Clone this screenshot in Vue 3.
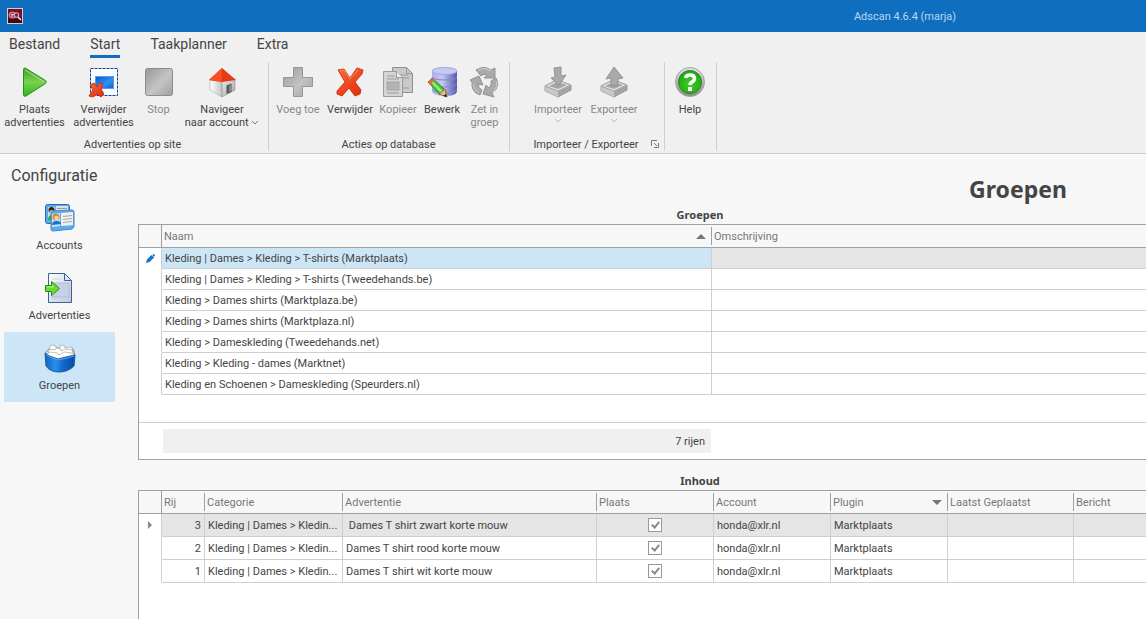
<script setup>
import { ref } from "vue";

const tabs = ["Bestand", "Start", "Taakplanner", "Extra"]
const activeTab = ref("Start")
const activePage = ref("Groepen")
const selectedGroup = ref(0)
const selectedAd = ref(0)

const groups = ref([
  { name: "Kleding | Dames > Kleding > T-shirts (Marktplaats)", description: "" },
  { name: "Kleding | Dames > Kleding > T-shirts (Tweedehands.be)", description: "" },
  { name: "Kleding > Dames shirts (Marktplaza.be)", description: "" },
  { name: "Kleding > Dames shirts (Marktplaza.nl)", description: "" },
  { name: "Kleding > Dameskleding (Tweedehands.net)", description: "" },
  { name: "Kleding > Kleding - dames (Marktnet)", description: "" },
  { name: "Kleding en Schoenen > Dameskleding (Speurders.nl)", description: "" },
])

const ads = ref([
  { row: 3, category: "Kleding | Dames > Kledin...", title: "\u00a0Dames T shirt zwart korte mouw", place: true },
  { row: 2, category: "Kleding | Dames > Kledin...", title: "Dames T shirt rood korte mouw", place: true },
  { row: 1, category: "Kleding | Dames > Kledin...", title: "Dames T shirt wit korte mouw", place: true },
])
</script>

<template>
  <div class="app">
    <header class="titlebar">
      <svg class="logo" viewBox="0 0 16 16">
        <rect x="0.5" y="0.5" width="15" height="15" fill="#6d1427" stroke="#e3c5cb" />
        <path d="M1 11H15V15H1z" fill="#3c0914" />
        <ellipse cx="5.5" cy="7" rx="3.5" ry="3" fill="#a84a5b" stroke="#d9939f" />
        <path d="M4 6.500h3M4 8h2" stroke="#e8c0c8" />
        <circle cx="9.500" cy="7" r="2.300" fill="#812437" stroke="#e8c0c8" />
        <path d="M11 9l3 3" stroke="#f3dde1" stroke-width="1.500" />
      </svg>
      <span class="appName">Adscan 4.6.4 (marja)</span>
    </header>

    <nav class="tabs">
      <button v-for="tab in tabs" :key="tab" :class="{ active: tab === activeTab }" @click="activeTab = tab">{{ tab }}</button>
    </nav>

    <div class="ribbon">
      <section class="group">
        <div class="tools">
          <button class="tool wide">
            <svg viewBox="0 0 32 32">
              <defs>
                <linearGradient id="play" x2="0" y2="1"><stop stop-color="#3aa02c" /><stop offset="0.5" stop-color="#7ad34f" /><stop offset="1" stop-color="#2fb51c" /></linearGradient>
              </defs>
              <path d="M4.500 3.500Q4.500 1.500 6.500 2.200L26.500 14.500Q28 16 26.500 17.500L7 30Q5 31 4.500 29z" fill="url(#play)" stroke="#2b8e20" />
              <path d="M6 4L25.500 16" stroke="#a5e28b" fill="none" />
            </svg>
            <span>Plaats<br>advertenties</span>
          </button>
          <button class="tool wide">
            <svg viewBox="0 0 32 32">
              <defs>
                <linearGradient id="blue" x2="1" y2="1"><stop stop-color="#1356c4" /><stop offset="0.600" stop-color="#2b93f3" /><stop offset="1" stop-color="#1259c8" /></linearGradient>
                <linearGradient id="red" x2="0.700" y2="1"><stop stop-color="#ff6a3c" /><stop offset="1" stop-color="#e03210" /></linearGradient>
              </defs>
              <rect x="2.500" y="2.500" width="27" height="27" fill="#f8fbff" stroke="#113f9e" stroke-dasharray="3 1" />
              <rect x="7.500" y="10.500" width="18" height="12" fill="url(#blue)" stroke="#5b9be6" />
              <path d="M2 19l4-2 3 4 3-4 3 1-2 5 3 5-3 3-4-3-4 3-4-1 4-6z" fill="url(#red)" stroke="#c8330f" stroke-linejoin="round" />
            </svg>
            <span>Verwijder<br>advertenties</span>
          </button>
          <button class="tool narrow" disabled>
            <svg viewBox="0 0 32 32">
              <defs>
                <linearGradient id="gray" x2="1" y2="1"><stop stop-color="#989898" /><stop offset="0.550" stop-color="#c4c4c4" /><stop offset="1" stop-color="#a0a0a0" /></linearGradient>
              </defs>
              <rect x="2.500" y="2.500" width="27" height="27" rx="2" fill="url(#gray)" stroke="#8c8c8c" />
            </svg>
            <span>Stop</span>
          </button>
          <button class="tool widest">
            <svg viewBox="0 0 32 32">
              <defs>
                <linearGradient id="wall"><stop stop-color="#fff" /><stop offset="1" stop-color="#c3c6c9" /></linearGradient>
                <linearGradient id="wallRight" x2="1" y2="1"><stop stop-color="#e8e9ea" /><stop offset="1" stop-color="#a2a5a8" /></linearGradient>
              </defs>
              <path d="M4 13v11l12 7V15z" fill="url(#wall)" stroke="#aaa" stroke-width="0.600" />
              <path d="M16 15v16l13-7V13z" fill="url(#wallRight)" stroke="#8c8c8c" stroke-width="0.600" />
              <path d="M20.500 19.500l5-2v8.500l-5 2z" fill="#56595c" />
              <path d="M23 20l2-1v6l-2 1z" fill="#87898c" />
              <path d="M16 2L3 14l13 2 14-2z" fill="#e63916" />
              <path d="M16 2L3 14l13 2z" fill="#f94f24" />
            </svg>
            <span>Navigeer<br>naar account <svg class="chevron" viewBox="0 0 8 6"><path d="M1 1l3 3 3-3" /></svg></span>
          </button>
        </div>
        <div class="groupName">Advertenties op site</div>
      </section>

      <section class="group">
        <div class="tools">
          <button class="tool medium" disabled>
            <svg viewBox="0 0 32 32">
              <path d="M11.500 1.500h9v10h10v9h-10v10h-9v-10h-10v-9h10z" fill="url(#gray)" stroke="#979797" />
            </svg>
            <span>Voeg toe</span>
          </button>
          <button class="tool medium">
            <svg viewBox="0 0 32 32">
              <path d="M4 4l6-1 6 9 7-10 6 2-1 4-7 8 6 8-1 4-5 2-6-8-7 8-5-2v-3l8-9z" fill="url(#red)" stroke="#d53a16" stroke-linejoin="round" />
              <path d="M6 5l4-1 6 9 8-9" fill="none" stroke="#ff8a62" />
            </svg>
            <span>Verwijder</span>
          </button>
          <button class="tool small" disabled>
            <svg viewBox="0 0 32 32">
              <path d="M10.500 1.500h14l6 6v19h-20z" fill="#c9c9c9" stroke="#8f8f8f" />
              <path d="M24.500 1.500v6h6M14 9h12M14 12h13M14 22h13" fill="none" stroke="#999" />
              <path d="M1.500 5.500h13l6 6v19h-19z" fill="#d4d4d4" stroke="#9a9a9a" />
              <path d="M14.500 5.500v6h6" fill="#eee" stroke="#9a9a9a" />
              <path d="M5 10h8M5 13h12M5 27h12" stroke="#999" />
              <rect x="5" y="16" width="12" height="8" fill="#b3b3b3" stroke="#a5a5a5" />
            </svg>
            <span>Kopieer</span>
          </button>
          <button class="tool small">
            <svg viewBox="0 0 32 32">
              <defs>
                <linearGradient id="disk"><stop stop-color="#aeb1e6" /><stop offset="0.400" stop-color="#c6c8f2" /><stop offset="1" stop-color="#5558ad" /></linearGradient>
              </defs>
              <path d="M6 5v20q0 5 13 5 12 0 12-5V5z" fill="url(#disk)" />
              <path d="M6 11q2 3 13 3 10 0 12-3M6 17q2 4 13 4 10 0 12-4M6 23q2 4 13 4 10 0 12-4" fill="none" stroke="#8588cc" />
              <ellipse cx="18.500" cy="5" rx="12.500" ry="3.500" fill="#c7c9f3" stroke="#a3a6dd" />
              <path d="M2 16l4-4 13 12-5 5z" fill="#4bc938" stroke="#23861b" />
              <path d="M4 14l12 12" stroke="#a1ec86" stroke-width="2" />
              <path d="M2 16l4-4 3 2-5 5z" fill="#ee6548" />
              <path d="M13 28l6-5 2 8z" fill="#e9be80" stroke="#8d6a37" />
              <path d="M17 30l3-2 1 3z" fill="#222" />
            </svg>
            <span>Bewerk</span>
          </button>
          <button class="tool narrow" disabled>
            <svg viewBox="0 0 32 32">
              <g fill="#aaa" stroke="#929292" stroke-linejoin="round">
                <path d="M7 4Q15-1 22 4l4-2v10H15l3-3q-3-2-6 1z" />
                <path d="M27 12q5 9-4 15l2 4-11-3 3-9 3 3q3-3 2-7z" />
                <path d="M11 29Q2 26 3 16l-2-2 9-4 4 9-5-1q0 4 4 6z" />
              </g>
              <path d="M9 4q7-3 13 1M28 15q1 6-4 11M10 27q-5-3-6-9" fill="none" stroke="#d0d0d0" />
            </svg>
            <span>Zet in<br>groep</span>
          </button>
        </div>
        <div class="groupName">Acties op database</div>
      </section>

      <section class="group launcherGroup">
        <div class="tools">
          <button class="tool import" disabled>
            <svg viewBox="0 0 32 32">
              <path d="M3 20l12-6 14 5v5l-13 7-13-6z" fill="#a4a4a4" stroke="#999" />
              <path d="M3 20l13 5v6L3 25z" fill="#c8c8c8" />
              <path d="M3 20l12-6 14 5-13 6z" fill="#e2e2e2" stroke="#a5a5a5" />
              <path d="M7 20l8-4 10 3-9 4z" fill="#a5a5a5" />
              <path d="M12 2l7-1v9l5-1-7 10-8-7 4-1z" fill="#aaa" stroke="#939393" />
            </svg>
            <span>Importeer</span>
            <svg class="chevron" viewBox="0 0 8 6"><path d="M1 1l3 3 3-3" /></svg>
          </button>
          <button class="tool import" disabled>
            <svg viewBox="0 0 32 32">
              <path d="M3 20l12-6 14 5v5l-13 7-13-6z" fill="#a4a4a4" stroke="#999" />
              <path d="M3 20l13 5v6L3 25z" fill="#c8c8c8" />
              <path d="M3 20l12-6 14 5-13 6z" fill="#e2e2e2" stroke="#a5a5a5" />
              <path d="M7 20l8-4 10 3-9 4z" fill="#a5a5a5" />
              <path d="M16 1l9 11-5 1v6l-7 1v-8l-5 1z" fill="#aaa" stroke="#939393" />
            </svg>
            <span>Exporteer</span>
            <svg class="chevron" viewBox="0 0 8 6"><path d="M1 1l3 3 3-3" /></svg>
          </button>
        </div>
        <div class="groupName">
          Importeer / Exporteer
          <button class="launcher" aria-label="Importeer / Exporteer">
            <svg viewBox="0 0 8 8"><path d="M0.500 6V0.500H6M3 3l3 3M7.500 3v4.500H3" fill="none" stroke="#777" /></svg>
          </button>
        </div>
      </section>

      <section class="group">
        <div class="tools">
          <button class="tool small">
            <svg viewBox="0 0 32 32">
              <defs>
                <linearGradient id="ring" x2="0" y2="1"><stop stop-color="#e4e4e4" /><stop offset="1" stop-color="#888" /></linearGradient>
                <radialGradient id="help" cy="0.600" r="0.700"><stop stop-color="#3fd020" /><stop offset="1" stop-color="#16a012" /></radialGradient>
              </defs>
              <circle cx="16" cy="16" r="14.500" fill="url(#ring)" stroke="#a5a5a5" />
              <circle cx="16" cy="16" r="11.500" fill="url(#help)" stroke="#1f8a1b" />
              <path d="M11.500 12Q12 9 16 9q4.500 0 4.500 3.500 0 2-2.500 3.500-2 1-2 3" fill="none" stroke="#fff" stroke-width="3.500" />
              <rect x="14" y="21" width="4" height="4" fill="#fff" />
            </svg>
            <span>Help</span>
          </button>
        </div>
        <div class="groupName"></div>
      </section>
    </div>

    <div class="body">
      <aside class="sidebar">
        <h2>Configuratie</h2>
        <button class="page" :class="{ active: activePage === 'Accounts' }" @click="activePage = 'Accounts'">
          <svg viewBox="0 0 32 32">
            <rect x="1.500" y="2.500" width="24" height="19" rx="2" fill="#57aaf0" stroke="#35689e" />
            <rect x="12" y="4" width="12" height="13" fill="#d9e2ea" />
            <rect x="4" y="5" width="7" height="12" fill="#bce2fa" />
            <circle cx="7.500" cy="8" r="3" fill="#33251a" />
            <circle cx="7.500" cy="10" r="2" fill="#f0bd8c" />
            <path d="M4 18q0-5 4-5t4 5z" fill="#27ab3c" />
            <path d="M13 6.500h10" stroke="#999" />
            <path d="M7 11q0-2 2-2l19-1q2 0 2 2v14q0 2-2 3l-19 2q-2 0-2-2z" fill="#58aef4" stroke="#4a86bd" />
            <path d="M17 11l12-1v13l-12 1z" fill="#f1f0ef" />
            <path d="M8 12l8-1v13l-8 1z" fill="#c0e6ff" />
            <circle cx="12" cy="15" r="3.500" fill="#d98a25" />
            <circle cx="12.500" cy="16" r="2.300" fill="#ffd09c" />
            <path d="M8 23q0-4 4.500-4t4.500 3z" fill="#1e6fcb" />
            <path d="M19 14.500l9-1M19 17.500l9-1M19 20.500l9-1" stroke="#a5a5a5" />
          </svg>
          <span>Accounts</span>
        </button>
        <button class="page" :class="{ active: activePage === 'Advertenties' }" @click="activePage = 'Advertenties'">
          <svg viewBox="0 0 32 32">
            <defs>
              <linearGradient id="paper" x2="1" y2="1"><stop stop-color="#fff" /><stop offset="1" stop-color="#b8c6e0" /></linearGradient>
            </defs>
            <path d="M4.500 1.500h16l7 7v22h-23z" fill="url(#paper)" stroke="#44638a" />
            <path d="M20.500 1.500v7h7z" fill="#d6e8fb" stroke="#44638a" />
            <path d="M8 7h9M8 27h16" stroke="#cdd5e4" />
            <rect x="8" y="11" width="17" height="14" fill="#c7d1e5" stroke="#b0bdd3" />
            <path d="M1.500 13.500h6v-4l8 7-8 7v-4h-6z" fill="#6dda2f" stroke="#268a18" />
            <path d="M3 15h6v-2" fill="none" stroke="#bdf494" />
          </svg>
          <span>Advertenties</span>
        </button>
        <button class="page" :class="{ active: activePage === 'Groepen' }" @click="activePage = 'Groepen'">
          <svg viewBox="0 0 32 32">
            <defs>
              <linearGradient id="box"><stop stop-color="#1364bf" /><stop offset="0.350" stop-color="#2b8fe9" /><stop offset="0.600" stop-color="#1467cf" /><stop offset="1" stop-color="#064ba8" /></linearGradient>
            </defs>
            <path d="M2 10l4-4 23 1 2 6-10 3-19-2z" fill="#e7e5e1" stroke="#888" />
            <g fill="#fff" stroke="#a5a4a1" stroke-width="0.700">
              <path d="M5 7l2-4 5 1v2h4V3l5 1v2l7-1 1 8H6z" />
              <path d="M4 10l2-3 5 1 1-2 5 1v2l4-2 7 1 2 6-20 2z" />
              <path d="M3 12l3-2 7 1 2 2 5-3 9 1 1 4-16 3z" />
            </g>
            <path d="M1 11l4 3 9 3 8-2 9-2-1 11q-6 6-15 6T2 24z" fill="url(#box)" stroke="#1a5aa6" />
            <path d="M2 12l4 3 8 3 9-2 7-2" fill="none" stroke="#5aa9ee" />
          </svg>
          <span>Groepen</span>
        </button>
      </aside>

      <main class="content">
        <h1>Groepen</h1>
        <h3>Groepen</h3>
        <div class="grid groupGrid">
          <table>
            <colgroup><col class="mark"><col class="name"><col></colgroup>
            <thead>
              <tr>
                <th></th>
                <th><div>Naam<i class="sort up"></i></div></th>
                <th><div>Omschrijving</div></th>
              </tr>
            </thead>
            <tbody>
              <tr v-for="(group, index) in groups" :key="group.name" :class="{ selected: index === selectedGroup }" @click="selectedGroup = index">
                <td>
                  <svg v-if="index === selectedGroup" class="pencil" viewBox="0 0 10 10"><path d="M0 10l1-4 5-5 3 3-5 5zM7 1l1-1q2 0 2 2L9 3z" fill="#1b75c4" /></svg>
                </td>
                <td :class="{ focused: index === selectedGroup }">{{ group.name }}</td>
                <td>{{ group.description }}</td>
              </tr>
            </tbody>
          </table>
          <div class="footer"><div class="total">{{ groups.length }} rijen</div></div>
        </div>

        <h3>Inhoud</h3>
        <div class="grid adGrid">
          <table>
            <colgroup>
              <col class="mark"><col class="row"><col class="category"><col class="ad"><col class="field"><col class="field"><col class="field"><col class="date"><col>
            </colgroup>
            <thead>
              <tr>
                <th></th>
                <th><div>Rij</div></th>
                <th><div>Categorie</div></th>
                <th><div>Advertentie</div></th>
                <th><div>Plaats</div></th>
                <th><div>Account</div></th>
                <th><div>Plugin<i class="sort down"></i></div></th>
                <th><div>Laatst Geplaatst</div></th>
                <th><div>Bericht</div></th>
              </tr>
            </thead>
            <tbody>
              <tr v-for="(ad, index) in ads" :key="ad.row" :class="{ selected: index === selectedAd }" @click="selectedAd = index">
                <td><i v-if="index === selectedAd" class="pointer"></i></td>
                <td class="number">{{ ad.row }}</td>
                <td>{{ ad.category }}</td>
                <td>{{ ad.title }}</td>
                <td class="check"><input type="checkbox" v-model="ad.place" :aria-label="'Plaats ' + ad.title"></td>
                <td>honda@xlr.nl</td>
                <td>Marktplaats</td>
                <td></td>
                <td></td>
              </tr>
            </tbody>
          </table>
        </div>
      </main>
    </div>
  </div>
</template>

<style>
body {
  background-color: #f7f7f7;
}
</style>

<style scoped>
.app {
  display: flex;
  flex-direction: column;
  min-height: 100vh;
  overflow: hidden;
  background-color: #f7f7f7;
  color: #444;
  font-family: Roboto, "Noto Sans", sans-serif;
  font-size: 11px;
  line-height: 13px;
}

button {
  border: none;
  padding: 0;
  background: none;
  color: inherit;
  font: inherit;
}

.titlebar {
  display: flex;
  align-items: center;
  height: 32px;
  padding-left: 7px;
  background-color: #106ebe;
  color: #b9d8f2;
}

.logo {
  width: 16px;
  height: 16px;
}

.appName {
  flex: 1;
  padding-left: 641px;
  text-align: center;
  white-space: nowrap;
}

.tabs {
  display: flex;
  gap: 30px;
  height: 30px;
  padding-left: 9px;
  background-color: #f0f0f0;
}

.tabs button {
  height: 26px;
  padding-top: 2px;
  border-bottom: 3px solid transparent;
  font-size: 14px;
}

.tabs .active {
  border-color: #106ebe;
}

.ribbon {
  display: flex;
  height: 91px;
  background-color: #f0f0f0;
  border-bottom: 1px solid #cdcdcd;
}

.group {
  display: flex;
  flex-direction: column;
  justify-content: space-between;
  height: 89px;
  padding: 0 3px 0 0;
  border-right: 1px solid #cfcfcf;
}

.group + .group {
  padding: 0 4px 0 3px;
}

.group.launcherGroup {
  padding: 0 22px 0 20px;
}

.tools {
  display: flex;
}

.tool {
  display: flex;
  flex-direction: column;
  align-items: center;
  padding-top: 4px;
  white-space: nowrap;
}

.tool > svg {
  width: 32px;
  height: 32px;
  margin-bottom: 5px;
}

.tool:disabled {
  color: #888;
}

.wide {
  width: 69px;
}

.widest {
  width: 86px;
}

.medium {
  width: 52px;
}

.import {
  width: 56px;
}

.small {
  width: 44px;
}

.narrow {
  width: 41px;
}

.tool .chevron {
  width: 8px;
  height: 6px;
  margin: 0;
  fill: none;
  stroke: #777;
}

.tool:disabled .chevron {
  margin-top: 2px;
  stroke: #bbb;
}

.groupName {
  position: relative;
  min-height: 13px;
  text-align: center;
}

.launcher {
  position: absolute;
  right: -17px;
  top: 0;
}

.launcher svg {
  width: 8px;
  height: 8px;
}

.body {
  display: flex;
  flex: 1;
}

.sidebar {
  flex: none;
  width: 111px;
  padding: 0 23px 0 4px;
}

h1,
h2,
h3 {
  margin: 0;
}

h2 {
  padding: 12px 0 6px 7px;
  font-size: 16px;
  font-weight: normal;
  line-height: 20px;
}

.page {
  display: flex;
  flex-direction: column;
  align-items: center;
  gap: 5px;
  width: 100%;
  height: 70px;
  padding-top: 10px;
}

.page svg {
  width: 32px;
  height: 32px;
}

.page.active {
  background-color: #cce6f7;
}

.content {
  display: flex;
  flex: 1;
  flex-direction: column;
  min-width: 0;
}

h1,
h3 {
  font-family: "Noto Sans", sans-serif;
  text-align: center;
}

h1 {
  padding: 19px 0 2px 752px;
  font-size: 23px;
  line-height: 32px;
}

h3 {
  padding: 1px 0 3px 116px;
  font-size: 11px;
  line-height: 13px;
}

.grid {
  border: 1px solid #a0a0a0;
  border-right: none;
  background-color: white;
}

.groupGrid {
  margin-bottom: 13px;
}

.adGrid {
  flex: 1;
  border-bottom: none;
}

table {
  width: 100%;
  table-layout: fixed;
  border-spacing: 0;
}

.mark {
  width: 23px;
}

.name {
  width: 550px;
}

.row {
  width: 43px;
}

.category {
  width: 138px;
}

.ad {
  width: 254px;
}

.field {
  width: 117px;
}

.date {
  width: 126px;
}

th {
  height: 22px;
  padding: 0;
  background-color: #f7f7f7;
  border-bottom: 1px solid #a0a0a0;
  color: #777;
  font-weight: normal;
  text-align: left;
}

th:first-child {
  border-right: 1px solid #a0a0a0;
}

th div {
  display: flex;
  align-items: center;
  justify-content: space-between;
  height: 18px;
  padding: 0 5px 0 2px;
  border-right: 1px solid #a0a0a0;
  white-space: nowrap;
}

th:last-child div {
  border-right: none;
}

.sort {
  border: 5px solid transparent;
}

.up {
  border-top: none;
  border-bottom-color: #777;
}

.down {
  border-bottom: none;
  border-top-color: #777;
}

td {
  height: 20px;
  padding: 0 3px;
  overflow: hidden;
  border-right: 1px solid #cfcfcf;
  border-bottom: 1px solid #cfcfcf;
  white-space: nowrap;
}

.adGrid td {
  height: 22px;
}

td:first-child {
  padding: 0 7px;
  border-bottom-color: transparent;
}

td:last-child {
  border-right: none;
}

.selected td:not(:first-child) {
  background-color: #e5e5e5;
}

.selected td.focused {
  background-color: #cce6f7;
}

.pencil {
  display: block;
  width: 9px;
  height: 9px;
}

.pointer {
  display: block;
  width: 0;
  margin-left: 2px;
  border: 4px solid transparent;
  border-left: 4px solid #888;
  border-right: none;
}

.number {
  text-align: right;
}

.check {
  text-align: center;
}

.check input {
  display: block;
  position: relative;
  appearance: none;
  box-sizing: border-box;
  width: 14px;
  height: 14px;
  margin: 0 auto;
  border: 1px solid #999;
  background-color: white;
}

.check input:checked::after {
  content: "";
  position: absolute;
  left: 4px;
  top: 1px;
  width: 3px;
  height: 6px;
  border: solid #888;
  border-width: 0 2px 2px 0;
  transform: rotate(40deg);
}

.footer {
  margin-top: 27px;
  padding: 6px 0 6px 24px;
  border-top: 1px solid #cfcfcf;
}

.total {
  box-sizing: border-box;
  max-width: 548px;
  padding: 6px 6px 5px;
  background-color: #f0f0f0;
  text-align: right;
}
</style>
